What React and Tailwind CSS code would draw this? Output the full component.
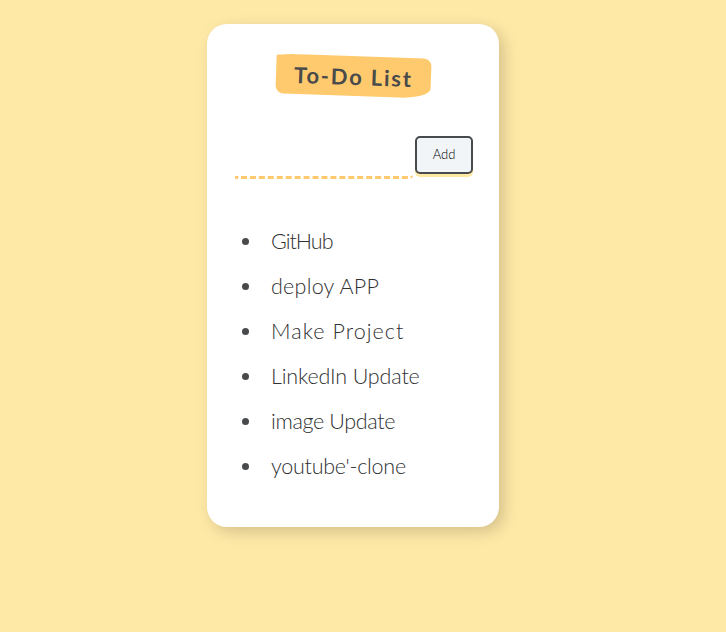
const items = [
  { text: "GitHub", tracking: "tracking-[-1px]" },
  { text: "deploy APP", tracking: "tracking-[0.25px]" },
  { text: "Make Project", tracking: "tracking-[1.05px]" },
  { text: "LinkedIn Update", tracking: "tracking-[-0.15px]" },
  { text: "image Update", tracking: "tracking-[-0.35px]" },
  { text: "youtube'-clone", tracking: "tracking-[-0.25px]" },
];

export default function App() {
  return (
    <div className="flex min-h-[632px] items-start bg-[#ffe9a7] pl-[207px] pt-6 font-['Lato',sans-serif] text-[#494a4b]">
      <main className="h-[503px] w-[292px] rounded-[20px] bg-white pl-7 pt-8 shadow-[5px_5px_15px_rgba(0,0,0,0.17)]">
        <h1 className="ml-[41px] flex h-10 w-[155px] rotate-2 items-center justify-center whitespace-nowrap rounded-[20%_5%_20%_5%/5%_20%_25%_20%] bg-[#ffca6e] text-[22px] font-bold tracking-[1.8px]">
          To-Do List
        </h1>
        <form className="mt-10 flex items-start gap-[2px]" onSubmit={(e) => e.preventDefault()}>
          <input
            type="text"
            aria-label="New task"
            className="h-[43px] w-[178px] rounded-br-[4px] border-b-[3px] border-dashed border-[#ffca6e] bg-transparent outline-none"
          />
          <button className="h-[38px] w-[58px] rounded-[5px] border-2 border-[#494a4b] bg-[#f1f5f8] text-[13px] font-light text-black shadow-[0_3px_0_#ffe8a3]">
            Add
          </button>
        </form>
        <ul className="mt-10">
          {items.map(({ text, tracking }) => (
            <li key={text} className="flex h-[45px] items-center pl-[7px]">
              <span className="mr-[22px] size-[7px] shrink-0 rounded-full bg-[#494a4b]" />
              <span className={`whitespace-nowrap text-[21.5px] font-light leading-[45px] text-[#303132] ${tracking}`}>{text}</span>
            </li>
          ))}
        </ul>
      </main>
    </div>
  );
}
